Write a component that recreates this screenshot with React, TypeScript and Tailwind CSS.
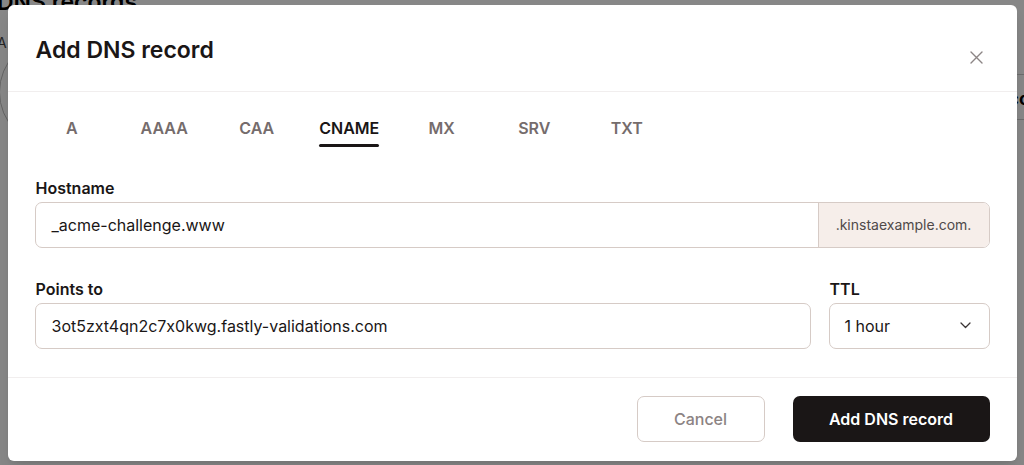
import React, { useState } from "react";

const TABS = ["A", "AAAA", "CAA", "CNAME", "MX", "SRV", "TXT"];

function CloseIcon() {
  return (
    <svg width="13" height="13" viewBox="0 0 13 13" fill="none" stroke="#8c8585" strokeWidth="1.4" strokeLinecap="round">
      <path d="M1 1l11 11M12 1L1 12" />
    </svg>
  );
}

function Chevron() {
  return (
    <svg width="11" height="7" viewBox="0 0 11 7" fill="none" stroke="#3a3434" strokeWidth="1.3" strokeLinecap="round" strokeLinejoin="round">
      <path d="M1 1l4.5 4.5L10 1" />
    </svg>
  );
}

export default function App() {
  const [tab, setTab] = useState("CNAME");

  return (
    <div
      className="relative w-[1024px] h-[465px] overflow-hidden bg-white text-[#1a1616] [font-feature-settings:'calt'_0]"
      style={{ fontFamily: "Inter, 'Noto Sans', sans-serif" }}
    >
      {/* page behind the modal */}
      <div>
        <h1 className="-mt-[12px] -ml-[3px] text-[23px] font-semibold leading-[28px] text-black">DNS records</h1>
        <p className="mt-[17px] -ml-[3px] text-[14px] leading-[20px] text-[#444]">A</p>
      </div>
      <div className="absolute left-[-1px] top-[37px] w-[110px] h-[110px] rounded-full border border-[#bbb]" />
      <div className="absolute right-0 top-[74px] w-[40px] border-t border-[#ccc]" />
      <div className="absolute right-[-6px] top-[85px] text-[18px] font-bold text-black">co</div>
      <div className="absolute right-0 top-[119px] w-[40px] border-t border-[#ccc]" />

      {/* backdrop */}
      <div className="absolute inset-0 bg-black/[0.47] flex items-center justify-center">
        <div className="w-[1009px] h-[456px] bg-white rounded-[6px] shadow-lg flex flex-col">
          {/* header */}
          <div className="relative h-[87px] px-[28px] pt-[29px] border-b border-[#f1eeee]">
            <h2 className="text-[23px] leading-[32px] font-semibold">Add DNS record</h2>
            <button className="absolute right-[34px] top-[46px]">
              <CloseIcon />
            </button>
          </div>

          {/* tabs */}
          <div className="flex pl-[18px]">
            {TABS.map((t) => {
              const active = t === tab;
              return (
                <button
                  key={t}
                  onClick={() => setTab(t)}
                  className="w-[92.5px] flex flex-col items-center pt-[25px]"
                >
                  <span
                    className={[
                      "text-[16px] leading-[22px] font-semibold",
                      active ? "text-[#1a1616]" : "text-[#756c6c]",
                    ].join(" ")}
                  >
                    {t}
                    <span
                      className={[
                        "block mt-[5px] h-[3px] rounded-full",
                        active ? "bg-[#1a1616]" : "bg-transparent",
                      ].join(" ")}
                    />
                  </span>
                </button>
              );
            })}
          </div>

          {/* form */}
          <div className="px-[27px] pt-[31px] pb-[28px] border-b border-[#f1eeee]">
            <label className="block text-[16px] leading-[20px] font-semibold pl-[1px]">Hostname</label>
            <div className="mt-[4px] flex h-[46px] rounded-[7px] border border-[#d6cbc6] overflow-hidden">
              <div className="flex-1 flex items-center pl-[16px] text-[16px]">_acme-challenge.www</div>
              <div className="w-[171px] flex items-center justify-center bg-[#f6eeea] border-l border-[#d6cbc6] text-[14px] text-[#4f4949]">
                .kinstaexample.com.
              </div>
            </div>

            <div className="mt-[31px] flex gap-[18px]">
              <div className="flex-1">
                <label className="block text-[16px] leading-[20px] font-semibold pl-[1px]">Points to</label>
                <div className="mt-[4px] h-[46px] rounded-[7px] border border-[#d6cbc6] flex items-center pl-[16px] text-[16px]">
                  3ot5zxt4qn2c7x0kwg.fastly-validations.com
                </div>
              </div>
              <div className="w-[161px]">
                <label className="block text-[16px] leading-[20px] font-semibold pl-[1px]">TTL</label>
                <div className="mt-[4px] h-[46px] rounded-[7px] border border-[#d6cbc6] flex items-center justify-between pl-[15px] pr-[18px] text-[16px]">
                  <span>1 hour</span>
                  <Chevron />
                </div>
              </div>
            </div>
          </div>

          {/* footer */}
          <div className="flex justify-end gap-[28px] px-[27px] pt-[18px]">
            <button className="w-[128px] h-[46px] rounded-[7px] border border-[#d6cbc6] text-[16px] font-medium text-[#8c8383]">
              Cancel
            </button>
            <button className="w-[197px] h-[46px] rounded-[7px] bg-[#1a1616] text-[16px] font-semibold text-white">
              Add DNS record
            </button>
          </div>
        </div>
      </div>
    </div>
  );
}
